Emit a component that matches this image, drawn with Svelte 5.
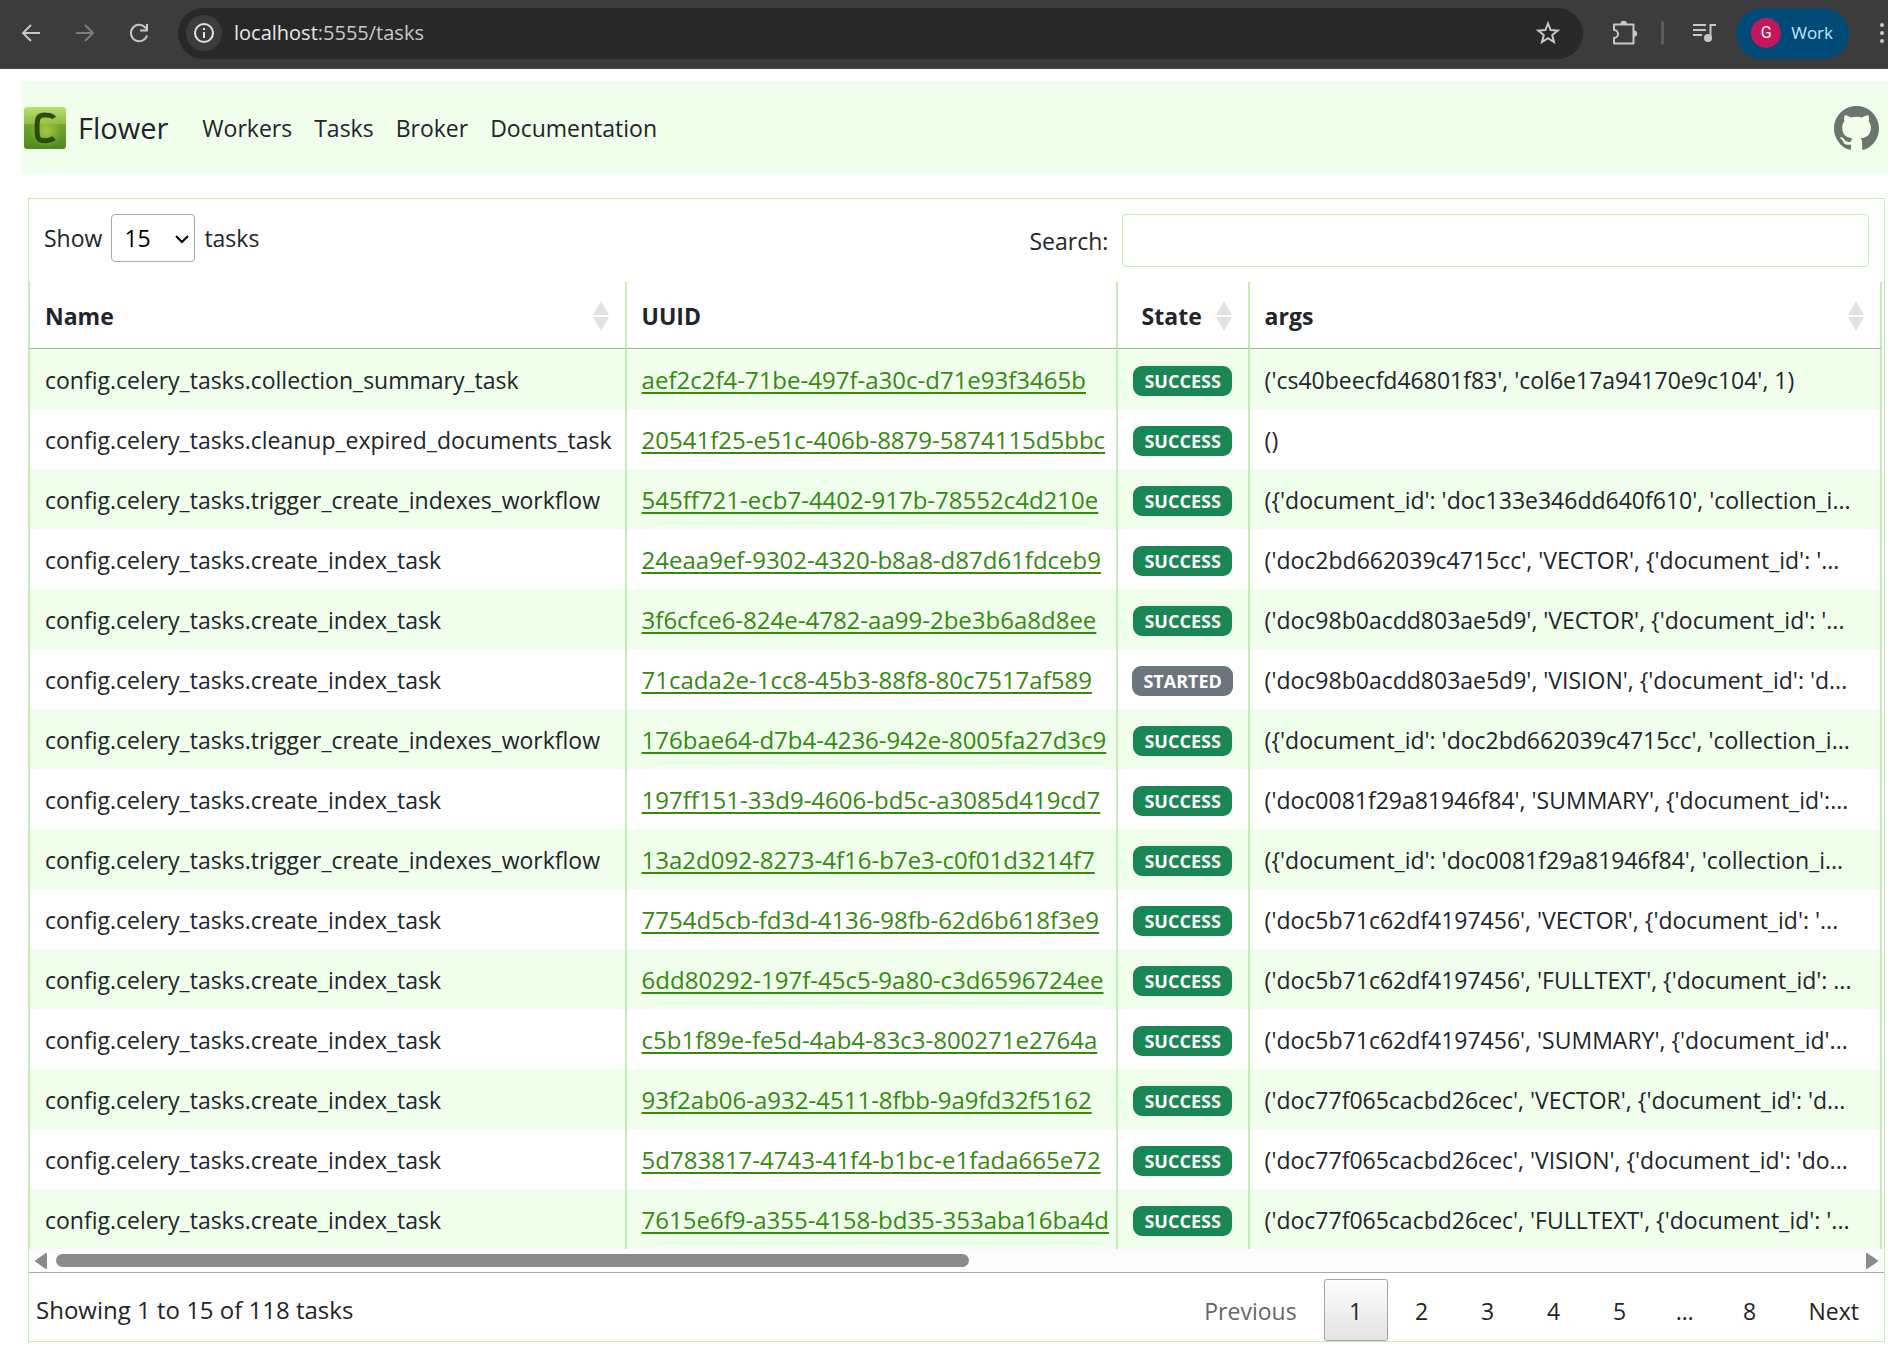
<script>
	const navLinks = ["Workers", "Tasks", "Broker", "Documentation"];
	const pageLengths = [10, 15, 25, 50, 100];

	const columns = [
		{ key: "name", label: "Name", sortable: true },
		{ key: "uuid", label: "UUID", sortable: false },
		{ key: "state", label: "State", sortable: true },
		{ key: "args", label: "args", sortable: true }
	];

	const prefix = "config.celery_tasks.";

	const tasks = [
		{ name: "collection_summary_task", uuid: "aef2c2f4-71be-497f-a30c-d71e93f3465b", state: "SUCCESS", args: "('cs40beecfd46801f83', 'col6e17a94170e9c104', 1)" },
		{ name: "cleanup_expired_documents_task", uuid: "20541f25-e51c-406b-8879-5874115d5bbc", state: "SUCCESS", args: "()" },
		{ name: "trigger_create_indexes_workflow", uuid: "545ff721-ecb7-4402-917b-78552c4d210e", state: "SUCCESS", args: "({'document_id': 'doc133e346dd640f610', 'collection_i..." },
		{ name: "create_index_task", uuid: "24eaa9ef-9302-4320-b8a8-d87d61fdceb9", state: "SUCCESS", args: "('doc2bd662039c4715cc', 'VECTOR', {'document_id': '..." },
		{ name: "create_index_task", uuid: "3f6cfce6-824e-4782-aa99-2be3b6a8d8ee", state: "SUCCESS", args: "('doc98b0acdd803ae5d9', 'VECTOR', {'document_id': '..." },
		{ name: "create_index_task", uuid: "71cada2e-1cc8-45b3-88f8-80c7517af589", state: "STARTED", args: "('doc98b0acdd803ae5d9', 'VISION', {'document_id': 'd..." },
		{ name: "trigger_create_indexes_workflow", uuid: "176bae64-d7b4-4236-942e-8005fa27d3c9", state: "SUCCESS", args: "({'document_id': 'doc2bd662039c4715cc', 'collection_i..." },
		{ name: "create_index_task", uuid: "197ff151-33d9-4606-bd5c-a3085d419cd7", state: "SUCCESS", args: "('doc0081f29a81946f84', 'SUMMARY', {'document_id':..." },
		{ name: "trigger_create_indexes_workflow", uuid: "13a2d092-8273-4f16-b7e3-c0f01d3214f7", state: "SUCCESS", args: "({'document_id': 'doc0081f29a81946f84', 'collection_i..." },
		{ name: "create_index_task", uuid: "7754d5cb-fd3d-4136-98fb-62d6b618f3e9", state: "SUCCESS", args: "('doc5b71c62df4197456', 'VECTOR', {'document_id': '..." },
		{ name: "create_index_task", uuid: "6dd80292-197f-45c5-9a80-c3d6596724ee", state: "SUCCESS", args: "('doc5b71c62df4197456', 'FULLTEXT', {'document_id': ..." },
		{ name: "create_index_task", uuid: "c5b1f89e-fe5d-4ab4-83c3-800271e2764a", state: "SUCCESS", args: "('doc5b71c62df4197456', 'SUMMARY', {'document_id'..." },
		{ name: "create_index_task", uuid: "93f2ab06-a932-4511-8fbb-9a9fd32f5162", state: "SUCCESS", args: "('doc77f065cacbd26cec', 'VECTOR', {'document_id': 'd..." },
		{ name: "create_index_task", uuid: "5d783817-4743-41f4-b1bc-e1fada665e72", state: "SUCCESS", args: "('doc77f065cacbd26cec', 'VISION', {'document_id': 'do..." },
		{ name: "create_index_task", uuid: "7615e6f9-a355-4158-bd35-353aba16ba4d", state: "SUCCESS", args: "('doc77f065cacbd26cec', 'FULLTEXT', {'document_id': '..." }
	];

	let pageLength = 15;
	let search = "";
	let page = 1;
</script>

<div class="browser">
	<button class="tool back" aria-label="Back">
		<svg viewBox="0 0 24 24"><path d="M21 12H4M12 4l-8 8 8 8" /></svg>
	</button>
	<button class="tool forward" aria-label="Forward" disabled>
		<svg viewBox="0 0 24 24"><path d="M3 12h17M12 4l8 8-8 8" /></svg>
	</button>
	<button class="tool reload" aria-label="Reload">
		<svg viewBox="0 0 24 24"><path d="M20 14.500a8.200 8.200 0 1 1-2-8.300L20 8.200M20 3v6.500h-7" /></svg>
	</button>
	<div class="address">
		<button class="site-info" aria-label="Site information">
			<svg viewBox="0 0 24 24"><circle cx="12" cy="12" r="9" /><path d="M12 11v6M12 7v2" /></svg>
		</button>
		<span class="url"><b>localhost</b>:5555/tasks</span>
		<button class="tool star" aria-label="Bookmark this tab">
			<svg viewBox="0 0 24 24"><path d="M12 2.500l2.600 6.600 7 .5-5.400 4.500 1.800 6.900-6-3.900-6 3.900 1.800-6.900-5.400-4.500 7-.5z" /></svg>
		</button>
	</div>
	<button class="tool puzzle" aria-label="Extensions">
		<svg viewBox="0 0 26 26"><path d="M3 4.500h19.500v19H3v-5.500a4 4 0 0 0 0-8z" stroke-linejoin="round" /><path class="solid" d="M9.500 4a3.200 3.200 0 0 1 6.400 0zM23 10.500a3.200 3.200 0 0 1 0 6.400z" /></svg>
	</button>
	<span class="divider"></span>
	<button class="tool media" aria-label="Media controls">
		<svg viewBox="0 0 24 24"><path d="M1 4h13M1 9h13M1 14h9M18.500 17V4H24" /><circle class="solid" cx="16" cy="17" r="4" /></svg>
	</button>
	<button class="profile"><span class="avatar">G</span>Work</button>
	<button class="tool more" aria-label="More">
		<svg viewBox="0 0 24 24"><circle class="solid" cx="12" cy="4" r="2" /><circle class="solid" cx="12" cy="12" r="2" /><circle class="solid" cx="12" cy="20" r="2" /></svg>
	</button>
</div>

<nav class="navbar">
	<a class="brand" href="/">
		<svg viewBox="0 0 42 42" aria-hidden="true">
			<defs>
				<linearGradient id="tile" x1="0" y1="0" x2="0" y2="1">
					<stop offset="0" stop-color="#b7e26c" />
					<stop offset=".4" stop-color="#8fbd48" />
					<stop offset=".42" stop-color="#73a42d" />
					<stop offset="1" stop-color="#4f8a20" />
				</linearGradient>
				<radialGradient id="glow">
					<stop offset="0" stop-color="#a9c743" />
					<stop offset="1" stop-color="#a9c743" stop-opacity="0" />
				</radialGradient>
			</defs>
			<rect width="42" height="42" rx="3" fill="url(#tile)" />
			<circle cx="22" cy="24" r="16" fill="url(#glow)" />
			<path d="M30 11C28 7.500 17 7 14.500 10.500C12.500 14 12.500 28 14.500 31.500C17 35 27 34 30 31" fill="none" stroke="#2b4c0b" stroke-width="5" />
		</svg>
		Flower
	</a>
	{#each navLinks as link}
	<a class="nav-link" href="/{link.toLowerCase()}">{link}</a>
	{/each}
	<a class="github" href="/github" aria-label="GitHub">
		<svg viewBox="0 0 16 16"><path d="M8 0C3.580 0 0 3.580 0 8c0 3.540 2.290 6.530 5.470 7.590.4.070.55-.17.55-.38 0-.19-.01-.82-.01-1.490-2.010.37-2.530-.49-2.690-.94-.09-.23-.48-.94-.82-1.130-.28-.15-.68-.52-.01-.53.63-.01 1.080.58 1.230.82.72 1.210 1.870.87 2.330.66.07-.52.28-.87.51-1.070-1.780-.2-3.640-.89-3.640-3.950 0-.87.31-1.590.82-2.150-.08-.2-.36-1.020.08-2.120 0 0 .67-.21 2.200.82.64-.18 1.320-.27 2-.27s1.360.09 2 .27c1.530-1.040 2.200-.82 2.200-.82.44 1.100.16 1.920.08 2.120.51.56.82 1.270.82 2.150 0 3.070-1.870 3.750-3.650 3.950.29.25.54.73.54 1.480 0 1.070-.01 1.930-.01 2.200 0 .21.15.46.55.38A8.010 8.010 0 0 0 16 8c0-4.420-3.580-8-8-8z" /></svg>
	</a>
</nav>

<main class="tasks">
	<div class="controls">
		<label class="length">
			Show
			<span class="select">
				<select bind:value={pageLength}>
					{#each pageLengths as n}
					<option value={n}>{n}</option>
					{/each}
				</select>
				<svg viewBox="0 0 14 10" aria-hidden="true"><path d="M1 2l6 6 6-6" /></svg>
			</span>
			tasks
		</label>
		<label class="search">
			Search:
			<input type="search" bind:value={search} />
		</label>
	</div>

	<table>
		<thead>
			<tr>
				{#each columns as col}
				<th class={col.key}>
					<div class="heading">
						{col.label}
						{#if col.sortable}
						<svg class="sort" viewBox="0 0 16 30" aria-hidden="true"><path d="M0 14L8 0l8 14zM0 16h16L8 30z" /></svg>
						{/if}
					</div>
				</th>
				{/each}
			</tr>
		</thead>
		<tbody>
			{#each tasks as task}
			<tr>
				<td>{prefix}{task.name}</td>
				<td class="uuid"><a href="/task/{task.uuid}">{task.uuid}</a></td>
				<td class="state"><span class="badge" class:started={task.state == "STARTED"}>{task.state}</span></td>
				<td>{task.args}</td>
			</tr>
			{/each}
		</tbody>
	</table>

	<div class="scrollbar" aria-hidden="true">
		<svg viewBox="0 0 12 16"><path d="M11 1v14L1 8z" stroke-linejoin="round" /></svg>
		<div class="track"><div class="thumb"></div></div>
		<svg viewBox="0 0 12 16"><path d="M1 1v14l10-7z" stroke-linejoin="round" /></svg>
	</div>

	<div class="footer">
		<div>Showing 1 to 15 of 118 tasks</div>
		<div class="pages">
			<button disabled>Previous</button>
			{#each [1, 2, 3, 4, 5] as n}
			<button class:current={n == page} on:click={() => (page = n)}>{n}</button>
			{/each}
			<span class="ellipsis">…</span>
			<button class:current={page == 8} on:click={() => (page = 8)}>8</button>
			<button>Next</button>
		</div>
	</div>
</main>

<style>
	:global(body) {
		margin: 0;
		background: #fff;
		color: #212529;
		font-family: "Open Sans", "Noto Sans", sans-serif;
		font-size: 23px;
		line-height: 36px;
		overflow-x: hidden;
	}
	button {
		font: inherit;
		color: inherit;
		background: none;
		border: 0;
		padding: 0;
		flex: none;
	}
	svg {
		display: block;
		flex: none;
	}

	/* browser toolbar */
	.browser {
		display: flex;
		align-items: center;
		height: 69px;
		box-sizing: border-box;
		padding: 0 0 2px 19px;
		background: #3c3c3c;
		color: #c7c7c7;
		border-bottom: 1px solid #4a4547;
	}
	.tool svg {
		width: 24px;
		height: 24px;
		fill: none;
		stroke: currentColor;
		stroke-width: 2;
	}
	.tool .solid {
		fill: currentColor;
		stroke: none;
	}
	.forward {
		margin-left: 30px;
		color: #7c7c7c;
	}
	.reload {
		margin-left: 30px;
	}
	.address {
		display: flex;
		align-items: center;
		flex: 1;
		height: 51px;
		margin-left: 27px;
		padding: 0 23px 0 8px;
		box-sizing: border-box;
		border-radius: 26px;
		background: #282828;
	}
	.site-info {
		display: grid;
		place-items: center;
		width: 36px;
		height: 36px;
		border-radius: 50%;
		background: #3c3c3c;
	}
	.site-info svg {
		width: 24px;
		height: 24px;
		fill: none;
		stroke: #e3e3e3;
		stroke-width: 2;
	}
	.url {
		flex: 1;
		margin-left: 12px;
		font-size: 20px;
	}
	.url b {
		font-weight: normal;
		color: #e8e8e8;
	}
	.puzzle {
		margin-left: 28px;
	}
	.puzzle svg {
		width: 26px;
		height: 26px;
	}
	.divider {
		width: 3px;
		height: 24px;
		margin: 0 28px 0 24px;
		background: #5c5c5c;
		border-radius: 2px;
	}
	.profile {
		display: flex;
		align-items: center;
		gap: 10px;
		height: 51px;
		margin-left: 20px;
		padding: 0 16px 0 15px;
		border-radius: 26px;
		background: #004a77;
		color: #c2e7ff;
		font-size: 17px;
	}
	.avatar {
		width: 30px;
		height: 30px;
		border-radius: 50%;
		background: #c2185b;
		color: #fff;
		font: 16px/30px Roboto, sans-serif;
	}
	.more {
		margin: 0 -6px 0 21px;
	}

	/* navbar */
	.navbar {
		display: flex;
		align-items: center;
		height: 93px;
		box-sizing: border-box;
		margin: 12px 0 24px 22px;
		padding: 1px 9px 0 2px;
		background: #efffeb;
	}
	.navbar a {
		color: #212529;
		text-decoration: none;
	}
	.brand {
		display: flex;
		align-items: center;
		gap: 12px;
		margin-right: 23px;
		font-size: 29px;
	}
	.brand svg {
		width: 42px;
		height: 42px;
	}
	.nav-link {
		padding: 0 11px;
	}
	.github {
		margin-left: auto;
	}
	.github svg {
		width: 45px;
		height: 45px;
		fill: #6c746b;
	}

	/* task table */
	.tasks {
		margin: 0 3px 0 28px;
		border: 1px solid #c5ebb7;
	}
	.controls {
		display: flex;
		justify-content: space-between;
		align-items: flex-start;
		padding: 15px;
	}
	.length,
	.search {
		display: flex;
		align-items: center;
		gap: 9px;
	}
	.select {
		position: relative;
	}
	.select svg {
		position: absolute;
		top: 20px;
		right: 6px;
		width: 14px;
		height: 10px;
		fill: none;
		stroke: #000;
		stroke-width: 2;
		pointer-events: none;
	}
	select {
		display: block;
		appearance: none;
		width: 84px;
		height: 48px;
		padding: 0 0 0 12px;
		border: 1px solid #aaa;
		border-radius: 4px;
		background: transparent;
		color: #000;
		font: inherit;
	}
	.search {
		gap: 14px;
		width: 46%;
		white-space: nowrap;
	}
	.search input {
		flex: 1;
		min-width: 0;
		height: 53px;
		box-sizing: border-box;
		border: 1px solid #c5ebb7;
		border-radius: 4px;
		padding: 0 12px;
		font: inherit;
	}
	table {
		width: 100%;
		table-layout: fixed;
		border-collapse: separate;
		border-spacing: 0;
		padding-right: 2px;
	}
	th,
	td {
		box-sizing: border-box;
		height: 60px;
		padding: 2px 0 0 15px;
		border-right: 2px solid #c5ebb7;
		text-align: left;
		white-space: nowrap;
	}
	th:first-child,
	td:first-child {
		border-left: 1px solid #c5ebb7;
	}
	th {
		height: 67px;
		padding-right: 16px;
		border-bottom: 1px solid #aaa;
		font-weight: 700;
	}
	th.name {
		width: 32.25%;
	}
	th.uuid {
		width: 26.5%;
	}
	th.state {
		width: 132px;
		padding-left: 24px;
	}
	.heading {
		display: flex;
		align-items: center;
		justify-content: space-between;
	}
	.sort {
		width: 16px;
		height: 30px;
		fill: #e1e3e2;
	}
	tbody tr:nth-child(odd) {
		background: #efffeb;
	}
	td.uuid {
		font-size: 24px;
	}
	td a {
		color: #35890f;
		text-underline-offset: 3px;
		text-decoration-thickness: 2px;
	}
	td.state {
		padding: 0;
		text-align: center;
	}
	.badge {
		display: block;
		width: max-content;
		margin: 4px auto 0;
		padding: 0 11px;
		border-radius: 9px;
		background: #198754;
		color: #fff;
		font-size: 18px;
		font-weight: 700;
		line-height: 30px;
	}
	.badge.started {
		background: #6c757d;
	}

	.scrollbar {
		display: flex;
		align-items: center;
		gap: 9px;
		height: 23px;
		padding: 0 6px;
		background: #fcfcfc;
		border-bottom: 1px solid #aaa;
	}
	.scrollbar svg {
		width: 12px;
		height: 16px;
		fill: #8b8b8b;
		stroke: #8b8b8b;
		stroke-width: 2;
	}
	.track {
		flex: 1;
	}
	.thumb {
		width: 50.7%;
		height: 13px;
		border-radius: 7px;
		background: #8b8b8b;
	}

	.footer {
		display: flex;
		align-items: center;
		justify-content: space-between;
		padding: 6px 0 0 7px;
		font-size: 24px;
	}
	.pages {
		display: flex;
		gap: 2px;
	}
	.pages button,
	.ellipsis {
		box-sizing: border-box;
		height: 62px;
		padding: 0 24px;
		border: 1px solid transparent;
		border-radius: 3px;
		font-size: 23px;
		line-height: 62px;
	}
	.pages button {
		min-width: 64px;
	}
	.pages .ellipsis {
		padding: 0 21px;
	}
	.pages button:disabled {
		color: #666;
	}
	.pages .current {
		border-color: #a5a5a5;
		background: linear-gradient(#fdfdfd, #e3e3e3);
	}
</style>
